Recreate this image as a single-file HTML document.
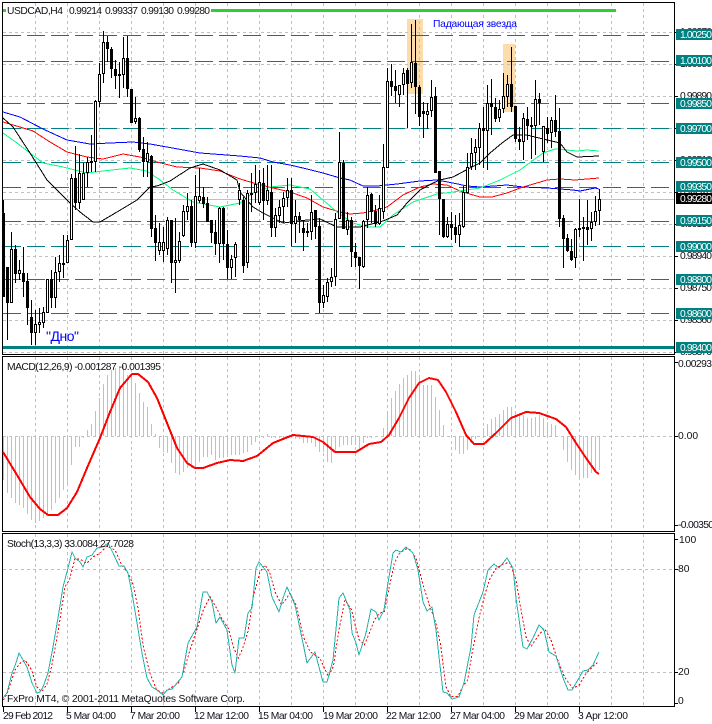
<!DOCTYPE html>
<html><head><meta charset="utf-8"><title>USDCAD,H4</title>
<style>
html,body{margin:0;padding:0;background:#fff;width:712px;height:724px;overflow:hidden}
svg{display:block}
text{font-family:"Liberation Sans","Noto Sans CJK SC",sans-serif;font-size:10.3px;fill:#101018}
.w{fill:#fff}
.p{stroke:#000;stroke-width:1;fill:none;shape-rendering:crispEdges}
polyline{shape-rendering:crispEdges;stroke-linejoin:round}
</style></head><body>
<svg width="712" height="724" viewBox="0 0 712 724" xmlns="http://www.w3.org/2000/svg">
<rect width="712" height="724" fill="#fff"/>
<!-- highlights -->
<rect x="407" y="19" width="16" height="75" fill="#fddcab"/>
<rect x="503" y="44" width="12" height="68" fill="#fddcab"/>
<!-- grid -->
<g stroke="#c0c0c0" stroke-width="1" fill="none" stroke-dasharray="3 3" shape-rendering="crispEdges">
<path d="M3 32.5H674M3 64.5H674M3 96.5H674M3 128.5H674M3 160.5H674M3 192.5H674M3 224.5H674M3 256.5H674M3 288.5H674M3 320.5H674M3 352.5H674"/>
<path d="M35.5 3V354M67.5 3V354M99.5 3V354M131.5 3V354M163.5 3V354M195.5 3V354M227.5 3V354M259.5 3V354M291.5 3V354M323.5 3V354M355.5 3V354M387.5 3V354M419.5 3V354M451.5 3V354M483.5 3V354M515.5 3V354M547.5 3V354M579.5 3V354M611.5 3V354M643.5 3V354"/>
<path d="M3 436.5H674M35.5 357V531M67.5 357V531M99.5 357V531M131.5 357V531M163.5 357V531M195.5 357V531M227.5 357V531M259.5 357V531M291.5 357V531M323.5 357V531M355.5 357V531M387.5 357V531M419.5 357V531M451.5 357V531M483.5 357V531M515.5 357V531M547.5 357V531M579.5 357V531M611.5 357V531M643.5 357V531"/>
<path d="M3 569.5H674M3 672.5H674M35.5 534V707M67.5 534V707M99.5 534V707M131.5 534V707M163.5 534V707M195.5 534V707M227.5 534V707M259.5 534V707M291.5 534V707M323.5 534V707M355.5 534V707M387.5 534V707M419.5 534V707M451.5 534V707M483.5 534V707M515.5 534V707M547.5 534V707M579.5 534V707M611.5 534V707M643.5 534V707"/>
</g>
<path d="M3 199.5H674" stroke="#c0c0c0" stroke-width="1" shape-rendering="crispEdges"/>
<!-- teal levels -->
<path d="M3 35.5H670M3 61.5H670M3 103.5H670M3 128.5H670M3 162.5H670M3 187.5H670M3 221.5H670M3 246.5H670M3 279.5H670M3 313.5H670" stroke="#008080" stroke-width="1" fill="none" stroke-dasharray="18 6" shape-rendering="crispEdges"/>
<rect x="3" y="346" width="671" height="3" fill="#008080"/>
<!-- green line -->
<rect x="211" y="9" width="405" height="3" fill="#32cd32"/>
<rect x="3" y="9" width="3" height="3" fill="#32cd32"/>
<!-- MAs -->
<g fill="none" stroke-width="1">
<polyline stroke="#0000ff" points="3,112 20,117 43,129 67,140 90,144 110,143 133,142 150,144 167,147 200,153 240,156 260,158 273,162 290,165 307,169 323,173 340,178 350,180 363,186 377,186 397,184 420,181 437,180 453,183 467,186 480,187 507,185 523,187 547,188 573,190 580,191 595,188 599,189"/>
<polyline stroke="#ff0000" points="3,122 20,127 33,131 50,142 67,152 87,157 103,159 123,154 140,157 157,162 177,167 200,168 220,171 240,179 257,184 273,188 290,192 307,198 323,207 340,212 350,214 363,213 377,210 387,207 403,195 420,187 433,184 447,185 460,191 473,195 480,197 492,197 507,193 523,187 530,185 547,180 560,179 575,180 599,178"/>
<polyline stroke="#00ff7f" points="3,133 17,143 30,153 43,163 63,167 87,173 103,171 130,168 147,171 160,180 173,190 193,202 220,207 240,203 253,193 270,187 290,185 310,189 323,200 337,212 353,223 367,227 380,227 393,215 413,202 437,194 453,192 480,188 500,180 520,170 543,153 555,149 577,151 587,150 599,151"/>
<polyline stroke="#000000" points="3,118 13,127 30,153 47,180 70,203 80,212 93,222 100,222 117,212 137,200 150,187 157,186 170,181 190,168 203,164 220,170 237,180 240,192 253,207 263,213 283,223 307,220 320,219 337,227 360,227 383,221 397,215 407,203 420,190 433,183 440,180 453,177 470,168 480,163 490,153 502,143 513,135 527,135 543,139 560,143 567,152 577,157 599,156"/>
</g>
<!-- candles -->
<g fill="none" stroke="#000" shape-rendering="crispEdges">
<path stroke-width="1" d="M3.5 200V297M7.5 267V340M11.5 232V303M15.5 245V283M19.5 260V280M23.5 247V297M27.5 273V325M31.5 300V345M35.5 310V345M39.5 308V333M43.5 307V328M47.5 279V313M51.5 270V308M55.5 257V308M59.5 255V282M63.5 235V278M67.5 235V263M71.5 174V240M75.5 146V210M79.5 154V209M83.5 163V200M87.5 157V187M91.5 135V172M95.5 100V172M99.5 63V107M103.5 31V83M107.5 36V62M111.5 47V78M115.5 60V89M119.5 62V98M123.5 37V88M127.5 36V97M131.5 89V123M135.5 97V124M139.5 117V152M143.5 137V177M147.5 142V177M151.5 155V237M155.5 215V261M159.5 223V255M163.5 227V262M167.5 217V255M171.5 220V283M175.5 218V293M179.5 232V263M183.5 205V237M187.5 193V220M191.5 200V247M195.5 175V248M199.5 168V203M203.5 187V208M207.5 197V222M211.5 220V243M215.5 220V255M219.5 207V263M223.5 207V260M227.5 230V279M231.5 255V279M235.5 242V277M239.5 183V205M243.5 197V273M247.5 190V268M251.5 173V212M255.5 165V203M259.5 170V205M263.5 168V220M267.5 165V205M271.5 165V237M275.5 208V237M279.5 200V223M283.5 192V223M287.5 178V207M291.5 178V246M295.5 200V243M299.5 212V233M303.5 220V251M307.5 223V237M311.5 195V240M315.5 210V239M319.5 218V313M323.5 285V308M327.5 278V302M331.5 268V287M335.5 213V286M339.5 132V219M343.5 160V229M347.5 212V235M351.5 217V267M355.5 243V267M359.5 257V289M363.5 220V268M367.5 187V228M371.5 193V223M375.5 205V227M379.5 195V225M383.5 144V219M387.5 68V168M391.5 64V96M395.5 70V103M399.5 85V107M403.5 68V95M407.5 68V128M411.5 24V88M415.5 20V114M419.5 85V126M423.5 102V138M427.5 103V129M431.5 80V117M435.5 87V173M439.5 171V235M443.5 199V238M447.5 217V238M451.5 212V240M455.5 215V243M459.5 213V247M463.5 186V228M467.5 153V193M471.5 138V170M475.5 139V170M479.5 123V165M483.5 107V168M487.5 85V170M491.5 79V135M495.5 98V122M499.5 100V122M503.5 73V113M507.5 75V107M511.5 47V112M515.5 106V142M519.5 127V150M523.5 113V160M527.5 107V140M531.5 117V159M535.5 80V155M539.5 93V125M543.5 126V162M547.5 117V143M551.5 117V148M555.5 95V137M559.5 108V227M563.5 215V268M567.5 234V252M571.5 239V261M575.5 228V268M579.5 199V237M583.5 217V261M587.5 200V245M591.5 212V241M595.5 196V226M599.5 189V225"/>
<path stroke-width="3" d="M3.5 213V297M7.5 267V303M11.5 249V303M15.5 249V274M19.5 270V274M23.5 273V282M27.5 281V308M31.5 317V333M35.5 324V333M39.5 322V325M43.5 312V323M47.5 279V313M51.5 279V298M55.5 272V298M59.5 263V272M63.5 263V265M67.5 240V263M71.5 178V240M75.5 178V203M79.5 173V203M83.5 173V200M87.5 162V173M91.5 161V163M95.5 101V162M99.5 74V102M103.5 42V74M107.5 42V49M111.5 49V69M115.5 69V76M119.5 74V76M123.5 58V75M127.5 58V89M131.5 89V123M135.5 118V122M139.5 118V150M143.5 149V162M147.5 153V162M151.5 156V229M155.5 228V243M159.5 242V251M163.5 242V251M167.5 220V249M171.5 220V263M175.5 260V263M179.5 241V261M183.5 211V236M187.5 206V212M191.5 206V243M195.5 196V243M199.5 196V201M203.5 197V204M207.5 203V222M211.5 220V233M215.5 232V244M219.5 208V244M223.5 208V244M227.5 244V268M231.5 259V268M235.5 244V258M239.5 190V200M243.5 200V266M247.5 193V263M251.5 193V195M255.5 184V193M259.5 182V203M263.5 183V201M267.5 190V201M271.5 192V228M275.5 215V228M279.5 207V216M283.5 198V207M287.5 190V198M291.5 190V224M295.5 216V224M299.5 216V220M303.5 228V233M307.5 231V233M311.5 212V232M315.5 210V227M319.5 226V303M323.5 295V303M327.5 282V297M331.5 277V282M335.5 219V277M339.5 162V219M343.5 163V229M347.5 220V230M351.5 220V252M355.5 252V258M359.5 257V266M363.5 221V267M367.5 195V220M371.5 194V212M375.5 211V224M379.5 208V224M383.5 167V212M387.5 81V168M391.5 81V87M395.5 86V91M399.5 85V95M403.5 73V85M407.5 70V84M411.5 62V83M415.5 63V87M419.5 87V117M423.5 111V114M427.5 111V115M431.5 97V111M435.5 96V173M439.5 171V199M443.5 199V237M447.5 224V237M451.5 224V228M455.5 227V235M459.5 225V235M463.5 192V227M467.5 167V193M471.5 153V167M475.5 147V153M479.5 128V148M483.5 128V131M487.5 103V131M491.5 103V107M495.5 107V119M499.5 109V118M503.5 96V109M507.5 84V97M511.5 84V107M515.5 106V139M519.5 139V142M523.5 118V142M527.5 119V126M531.5 125V127M535.5 99V126M539.5 99V103M543.5 126V152M547.5 128V134M551.5 120V133M555.5 120V132M559.5 131V219M563.5 218V239M567.5 238V251M571.5 251V260M575.5 229V258M579.5 228V230M583.5 227V229M587.5 227V230M591.5 222V229M595.5 211V222M599.5 199V211"/>
<path stroke="#fff" stroke-width="1" d="M11.5 250V302M19.5 271V273M35.5 325V332M39.5 323V324M43.5 313V322M47.5 280V312M55.5 273V297M59.5 264V271M67.5 241V262M71.5 179V239M79.5 174V202M83.5 174V199M87.5 163V172M95.5 102V161M99.5 75V101M103.5 43V73M123.5 59V74M135.5 119V121M147.5 154V161M159.5 243V250M163.5 243V250M167.5 221V248M175.5 261V262M179.5 242V260M183.5 212V235M187.5 207V211M195.5 197V242M199.5 197V200M219.5 209V243M231.5 260V267M235.5 245V257M239.5 191V199M247.5 194V262M255.5 185V192M259.5 183V202M267.5 191V200M275.5 216V227M279.5 208V215M283.5 199V206M287.5 191V197M295.5 217V223M311.5 213V231M323.5 296V302M327.5 283V296M331.5 278V281M335.5 220V276M339.5 163V218M347.5 221V229M363.5 222V266M367.5 196V219M379.5 209V223M383.5 168V211M387.5 82V167M399.5 86V94M403.5 74V84M411.5 63V82M427.5 112V114M431.5 98V110M447.5 225V236M459.5 226V234M463.5 193V226M467.5 168V192M471.5 154V166M475.5 148V152M479.5 129V147M487.5 104V130M499.5 110V117M503.5 97V108M507.5 85V96M523.5 119V141M531.5 126V126M535.5 100V125M543.5 127V151M551.5 121V132M575.5 230V257M591.5 223V228M595.5 212V221M599.5 200V210"/>
</g>
<!-- borders -->
<g class="p">
<path d="M2.5 2.5H674.5V354.5H2.5Z"/>
<path d="M2.5 356.5H674.5V531.5H2.5Z"/>
<path d="M2.5 533.5H674.5V706.5H2.5Z"/>
<path d="M674 32.5H678M674 64.5H678M674 96.5H678M674 128.5H678M674 160.5H678M674 192.5H678M674 224.5H678M674 256.5H678M674 288.5H678M674 320.5H678M674 352.5H678M674 362.5H678M674 436.5H678M674 525.5H678M674 539.5H678M674 569.5H678M674 672.5H678M674 703.5H678"/>
<path d="M3.5 707V712M67.5 707V712M131.5 707V712M195.5 707V712M259.5 707V712M323.5 707V712M387.5 707V712M451.5 707V712M515.5 707V712M579.5 707V712"/>
</g>
<!-- price axis plain labels -->
<g>
<text x="680" y="35" textLength="32">1.00270</text>
<text x="680" y="67" textLength="32">1.00080</text>
<text x="680" y="99" textLength="32">0.99890</text>
<text x="680" y="131" textLength="32">0.99700</text>
<text x="680" y="163" textLength="32">0.99510</text>
<text x="680" y="195" textLength="32">0.99320</text>
<text x="680" y="227" textLength="32">0.99130</text>
<text x="680" y="259" textLength="32">0.98940</text>
<text x="680" y="291" textLength="32">0.98750</text>
<text x="680" y="323" textLength="32">0.98560</text>
<text x="680" y="355" textLength="32">0.98370</text>
</g>
<!-- teal labels -->
<g fill="#008080">
<rect x="676" y="29" width="36" height="11"/><rect x="676" y="55" width="36" height="11"/><rect x="676" y="98" width="36" height="11"/><rect x="676" y="123" width="36" height="11"/><rect x="676" y="157" width="36" height="11"/><rect x="676" y="181" width="36" height="11"/><rect x="676" y="215" width="36" height="11"/><rect x="676" y="241" width="36" height="11"/><rect x="676" y="274" width="36" height="11"/><rect x="676" y="308" width="36" height="11"/><rect x="676" y="342" width="36" height="11"/>
</g>
<rect x="676" y="193" width="36" height="11" fill="#000"/>
<g>
<text class="w" x="680" y="38" textLength="32">1.00250</text>
<text class="w" x="680" y="64" textLength="32">1.00100</text>
<text class="w" x="680" y="107" textLength="32">0.99850</text>
<text class="w" x="680" y="132" textLength="32">0.99700</text>
<text class="w" x="680" y="166" textLength="32">0.99500</text>
<text class="w" x="680" y="190" textLength="32">0.99350</text>
<text class="w" x="680" y="202" textLength="32">0.99280</text>
<text class="w" x="680" y="224" textLength="32">0.99150</text>
<text class="w" x="680" y="250" textLength="32">0.99000</text>
<text class="w" x="680" y="283" textLength="32">0.98800</text>
<text class="w" x="680" y="317" textLength="32">0.98600</text>
<text class="w" x="680" y="351" textLength="32">0.98400</text>
</g>
<!-- chart text -->
<text x="7" y="14" textLength="56">USDCAD,H4</text>
<text x="69" y="14" textLength="33">0.99214</text>
<text x="105" y="14" textLength="33">0.99337</text>
<text x="141" y="14" textLength="33">0.99130</text>
<text x="177" y="14" textLength="33">0.99280</text>
<text x="433" y="27" textLength="84" style="fill:#0000ff">Падающая звезда</text>
<text x="46" y="341" textLength="33" style="fill:#0000ff;font-size:14px">"Дно"</text>
<!-- MACD -->
<path fill="none" stroke="#c0c0c0" stroke-width="1" shape-rendering="crispEdges" d="M3.5 436V480M7.5 436V493M11.5 436V498M15.5 436V503M19.5 436V505M23.5 436V508M27.5 436V514M31.5 436V520M35.5 436V523M39.5 436V521M43.5 436V518M47.5 436V515M51.5 436V510M55.5 436V503M59.5 436V498M63.5 436V490M67.5 436V485M71.5 436V465M75.5 436V447M79.5 436V447M83.5 436V438M87.5 436V430M91.5 436V424M95.5 436V411M99.5 436V398M103.5 436V384M107.5 436V375M111.5 436V370M115.5 436V368M119.5 436V368M123.5 436V365M127.5 436V375M131.5 436V376M135.5 436V383M139.5 436V393M143.5 436V402M147.5 436V407M151.5 436V424M155.5 436V434M159.5 436V448M163.5 436V452M167.5 436V453M171.5 436V463M175.5 436V473M179.5 436V475M183.5 436V472M187.5 436V468M191.5 436V468M195.5 436V467M199.5 436V462M203.5 436V457M207.5 436V457M211.5 436V455M215.5 436V460M219.5 436V458M223.5 436V458M227.5 436V457M231.5 436V455M235.5 436V455M239.5 436V455M243.5 436V453M247.5 436V452M251.5 436V445M255.5 436V442M259.5 436V438M263.5 436V438M267.5 436V434M271.5 436V438M275.5 436V438M279.5 436V438M283.5 436V438M287.5 436V438M291.5 436V435M295.5 436V439M299.5 436V439M303.5 436V443M307.5 436V443M311.5 436V443M315.5 436V447M319.5 436V452M323.5 436V452M327.5 436V462M331.5 436V463M335.5 436V453M339.5 436V447M343.5 436V445M347.5 436V445M351.5 436V445M355.5 436V445M359.5 436V450M363.5 436V443M367.5 436V438M371.5 436V438M383.5 436V428M387.5 436V412M391.5 436V398M395.5 436V391M399.5 436V384M403.5 436V378M407.5 436V375M411.5 436V371M415.5 436V371M419.5 436V375M423.5 436V385M427.5 436V385M431.5 436V385M435.5 436V397M439.5 436V410M443.5 436V425M455.5 436V450M459.5 436V454M463.5 436V454M467.5 436V450M471.5 436V443M475.5 436V439M483.5 436V428M487.5 436V424M491.5 436V419M495.5 436V417M499.5 436V414M503.5 436V410M507.5 436V407M511.5 436V407M515.5 436V412M519.5 436V413M523.5 436V415M527.5 436V418M531.5 436V418M535.5 436V417M539.5 436V415M543.5 436V418M547.5 436V422M551.5 436V424M555.5 436V425M563.5 436V450M567.5 436V462M571.5 436V470M575.5 436V475M579.5 436V478M583.5 436V478M587.5 436V478M591.5 436V473M595.5 436V470M599.5 436V470"/>
<polyline fill="none" stroke="#ff0000" stroke-width="2" points="3,452 17,475 30,497 40,509 48,515 58,515 67,508 77,492 87,468 100,438 110,412 120,388 132,374 138,374 148,382 157,398 167,423 177,448 187,463 195,468 203,468 217,463 230,460 243,461 257,456 273,443 293,435 313,437 323,442 335,452 356,452 369,444 381,442 389,435 399,418 409,398 419,383 429,378 438,380 446,392 456,412 466,435 474,444 484,444 496,433 511,418 526,412 539,413 556,419 566,427 576,443 586,458 596,472 599,474"/>
<text x="7" y="370" textLength="154">MACD(12,26,9) -0.001287 -0.001395</text>
<text x="678" y="367" textLength="34">0.00293</text>
<text x="678" y="439">0.00</text>
<text x="678" y="528" textLength="36">-0.00350</text>
<!-- Stoch -->
<polyline fill="none" stroke="#ff0000" stroke-width="3" stroke-dasharray="6 6" transform="translate(0,530) scale(.33333)" points="10,510 22,490 45,420 60,400 75,390 95,420 110,470 125,485 140,465 155,410 175,300 195,170 208,150 225,85 245,90 260,100 280,80 300,70 320,48 345,60 365,105 385,130 400,165 415,240 430,350 450,430 470,480 490,490 510,475 535,460 550,430 570,360 590,300 610,240 630,200 650,235 665,265 685,295 700,350 715,385 730,350 745,300 760,200 780,125 795,105 810,130 825,185 845,225 870,190 890,230 910,320 930,365 960,385 985,440 1000,410 1015,310 1035,210 1055,240 1068,295 1078,330 1093,345 1108,310 1123,270 1138,250 1153,245 1168,170 1183,100 1198,70 1218,57 1233,60 1248,85 1268,160 1288,225 1308,280 1323,350 1338,470 1353,500 1373,500 1388,470 1403,450 1418,360 1438,260 1453,200 1468,150 1488,115 1508,103 1528,97 1548,150 1563,240 1578,320 1593,350 1613,320 1633,295 1653,330 1673,390 1693,440 1718,475 1738,465 1758,430 1778,410 1793,398"/>
<polyline fill="none" stroke="#20b2aa" stroke-width="1" points="3,698 7,693 12,673 16,663 19,653 27,667 32,683 37,693 40,692 43,687 48,673 53,647 58,618 63,587 68,568 72,552 75,558 80,562 83,567 87,557 92,555 97,548 103,547 108,543 113,553 119,566 124,566 128,573 132,593 137,623 142,653 147,678 152,687 157,690 163,695 167,690 172,689 177,683 182,677 188,643 197,627 203,592 207,592 212,602 216,623 220,617 227,630 232,665 235,673 239,638 244,638 248,613 252,608 256,568 259,562 267,572 272,597 279,612 283,598 287,587 295,605 303,643 307,663 315,652 323,682 327,682 333,660 339,598 343,593 350,610 352,633 356,643 359,655 366,633 371,609 376,612 379,620 384,610 388,583 393,553 396,550 401,552 406,547 413,553 418,570 423,602 427,611 432,607 436,630 443,692 447,693 452,699 459,697 464,683 471,647 474,615 483,592 488,570 494,564 499,568 507,558 513,568 516,598 523,647 527,649 533,638 539,625 544,630 549,652 556,656 563,678 568,690 572,690 583,671 588,670 593,665 599,652"/>
<text x="7" y="547" textLength="127">Stoch(13,3,3) 33.0084 27.7028</text>
<text x="7" y="702" textLength="238">FxPro MT4, © 2001-2011 MetaQuotes Software Corp.</text>
<text x="679" y="543">100</text>
<text x="678" y="572">80</text>
<text x="678" y="675">20</text>
<text x="678" y="704">0</text>
<!-- time axis -->
<text x="3" y="719" textLength="50">29 Feb 2012</text>
<text x="66" y="719" textLength="50">5 Mar 04:00</text>
<text x="130" y="719" textLength="50">7 Mar 20:00</text>
<text x="194" y="719" textLength="55">12 Mar 12:00</text>
<text x="258" y="719" textLength="55">15 Mar 04:00</text>
<text x="323" y="719" textLength="55">19 Mar 20:00</text>
<text x="386" y="719" textLength="55">22 Mar 12:00</text>
<text x="450" y="719" textLength="55">27 Mar 04:00</text>
<text x="514" y="719" textLength="55">29 Mar 20:00</text>
<text x="578" y="719" textLength="50">3 Apr 12:00</text>
</svg>
</body></html>
